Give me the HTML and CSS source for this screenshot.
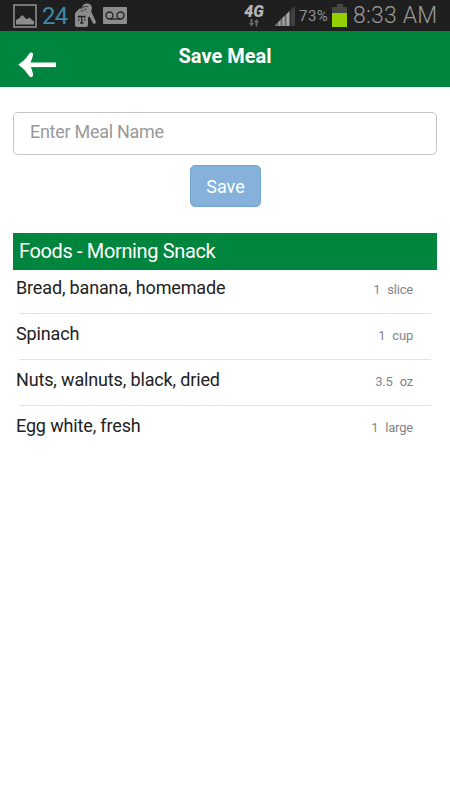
FILE: index.html
```html
<!DOCTYPE html>
<html lang="en">
<head>
    <meta charset="UTF-8">
    <meta name="viewport" content="width=device-width, initial-scale=1.0">
    <title>Save Meal</title>
    <link rel="stylesheet" href="styles.css">
</head>
<body>
    <!-- Device status bar -->
    <div class="status-bar">
        <div class="status-left">
            <svg class="icon-picture" width="24" height="24" viewBox="0 0 24 24">
                <rect x="1" y="1" width="22" height="22" fill="none" stroke="#8c8c8c" stroke-width="1.6"/>
                <path d="M3 20.500V16l3.500-2 2-2.500 1.500 0 2.500 3 2 .5 2-1.500 3 3 1.500.5v3.500z" fill="#8c8c8c"/>
            </svg>
            <span class="temperature">24</span>
            <svg class="icon-keys" width="22" height="25" viewBox="0 0 22 25">
                <path d="M0 10L4.500 5.500h4L13 10v12q0 2-2 2H2q-2 0-2-2z" fill="#8c8c8c"/>
                <path d="M7 5.500Q7.500 1 11 .5 16 0 17 4.500q0 2-1 3.500l5 11-1 2-2-.5-3.500-7-1.500 1V10L9 6z" fill="#8c8c8c"/>
                <path d="M5.500 7.500q1.500 1.500 3 0t3-1.500M8 5q1.500-2.500 3-1.500t2-.5" fill="none" stroke="#3c3c3c" stroke-width="1"/>
                <path d="M3.700 15V13.500h6.100V15M6.750 13.500v6.500M5 20h3.500" fill="none" stroke="#252525" stroke-width="1.300"/>
                <path d="M3 17.200h1.500M9 17.200h1.500" stroke="#252525" stroke-width="1.300"/>
            </svg>
            <svg class="icon-voicemail" width="24" height="17" viewBox="0 0 24 17">
                <rect width="24" height="17" rx="1" fill="#8c8c8c"/>
                <g fill="none" stroke="#292929" stroke-width="1.400">
                    <circle cx="6.500" cy="8.500" r="3.500"/>
                    <circle cx="17.500" cy="8.500" r="3.500"/>
                    <path d="M6.500 12h11"/>
                </g>
            </svg>
        </div>
        <div class="status-right">
            <div class="network">
                <span class="network-type">4G</span>
                <svg width="10" height="8" viewBox="0 0 10 8">
                    <path d="M1.600 0h1.800v4H5L2.500 7.500 0 4h1.600zM6.600 7.500h1.800V3.500H10L7.500 0 5 3.500h1.600z" fill="#6c6c6c"/>
                </svg>
            </div>
            <svg class="icon-signal" width="21" height="20" viewBox="0 0 21 20">
                <path d="M0 20L16 4.500V20z" fill="#696969"/>
                <path d="M4.500 20v-4l2-2v6zM8.500 20v-8l2-2v10zM12.500 20V8.200l2.500-2.400V20z" fill="#a6a6a6"/>
                <path d="M16.500 20V4L21 0v20z" fill="#404040"/>
            </svg>
            <span class="battery-level">73%</span>
            <svg class="icon-battery" width="15" height="23" viewBox="0 0 15 23">
                <path d="M5 0h6v3h4v6H0V3h5z" fill="#464646"/>
                <rect y="9" width="15" height="14" fill="#94d000"/>
            </svg>
            <span class="clock">8:33 AM</span>
        </div>
    </div>

    <header class="header">
        <svg class="back-arrow" width="39" height="26" viewBox="0 0 39 26">
            <path d="M7 12.800h31" stroke="#fff" stroke-width="4.600" fill="none"/>
            <path d="M.3 12.500Q7.500 8 11.300 1.500 12.200.2 13.700.5 15.700 1.200 15 3.500 13.500 8.500 11.800 12.500 13.800 17 15.100 22 15.500 24.500 13.700 25.100 12 25.600 11.200 24 7 17.500.3 12.500z" fill="#fff"/>
        </svg>
        <h1 class="title">Save Meal</h1>
    </header>

    <main class="content">
        <form class="meal-form">
            <input type="text" class="meal-name" placeholder="Enter Meal Name">
            <button type="button" class="save-button">Save</button>
        </form>

        <h2 class="section-title">Foods - Morning Snack</h2>
        <ul class="food-list">
            <li class="food"><span class="food-name">Bread, banana, homemade</span><span class="amount"><span>1</span><span>slice</span></span></li>
            <li class="food"><span class="food-name">Spinach</span><span class="amount"><span>1</span><span>cup</span></span></li>
            <li class="food"><span class="food-name">Nuts, walnuts, black, dried</span><span class="amount"><span>3.5</span><span>oz</span></span></li>
            <li class="food"><span class="food-name">Egg white, fresh</span><span class="amount"><span>1</span><span>large</span></span></li>
        </ul>
    </main>
</body>
</html>
```

FILE: styles.css
```css
* {
    box-sizing: border-box;
}

body {
    margin: 0;
    min-height: 100vh;
    background-color: #fff;
    color: #222;
    font-family: Roboto, sans-serif;
}

.status-bar {
    display: flex;
    justify-content: space-between;
    height: 31px;
    padding: 0 13px;
    background-color: #1f1f1f;
    color: #8f8f8f;
}

.status-left,
.status-right {
    display: flex;
    align-items: flex-start;
}

.icon-picture {
    margin-top: 4px;
}

.temperature {
    width: 26px;
    margin: 2px 0 0 5px;
    color: #3a8aa8;
    font-size: 24px;
    line-height: 28px;
    letter-spacing: -0.8px;
}

.icon-keys {
    margin: 3px 0 0 7px;
}

.icon-voicemail {
    margin: 7px 0 0 6px;
}

.network {
    display: flex;
    flex-direction: column;
    align-items: center;
    width: 20px;
    margin: 4px 10px 0 0;
}

.network-type {
    color: #b5b5b5;
    font-size: 16px;
    font-style: italic;
    font-weight: 900;
    line-height: 15px;
}

.icon-signal {
    margin-top: 6px;
}

.battery-level {
    width: 30px;
    margin: 6px 3px 0 4px;
    font-size: 15px;
    line-height: 20px;
    letter-spacing: 0.5px;
}

.icon-battery {
    margin-top: 4px;
}

.clock {
    width: 84px;
    margin: 1px 0 0 6px;
    color: #9a9a9a;
    font-size: 23px;
    font-weight: 300;
    line-height: 30px;
    letter-spacing: 0.2px;
    white-space: nowrap;
}

.header {
    display: grid;
    grid-template-columns: 1fr auto 1fr;
    height: 56px;
    padding: 0 18px;
    background-color: #00853e;
    color: #fff;
}

.back-arrow {
    margin-top: 21px;
}

.title {
    margin: 13px 0 0;
    font-size: 20px;
    font-weight: 700;
    line-height: 24px;
}

.content {
    padding: 25px 13px 0;
}

.meal-form {
    display: flex;
    flex-direction: column;
    align-items: center;
    gap: 10px;
}

.meal-name {
    width: 100%;
    height: 43px;
    padding: 0 16px 5px;
    border: 1px solid #c4c4c4;
    border-radius: 5px;
    font-family: inherit;
    font-size: 18px;
    letter-spacing: -0.28px;
}

.meal-name::placeholder {
    color: #999;
}

.save-button {
    width: 71px;
    height: 42px;
    padding: 0 0 0 1px;
    border: 1px solid #72a6d3;
    border-radius: 5px;
    background-color: #85b1db;
    color: #fff;
    font-family: inherit;
    font-size: 18px;
}

.section-title {
    height: 37px;
    margin: 26px 0 0;
    padding-left: 6px;
    background-color: #00853e;
    color: #fff;
    font-size: 20px;
    font-weight: 400;
    line-height: 36px;
    letter-spacing: -0.36px;
}

.food-list {
    margin: 0;
    padding: 0 6px 0 3px;
    list-style: none;
}

.food {
    display: flex;
    justify-content: space-between;
    height: 46px;
    padding: 10px 18px 0 0;
    line-height: 20px;
    background: linear-gradient(#e2e2e2, #e2e2e2) 3px 100% / 100% 1px no-repeat;
}

.food:first-child {
    height: 44px;
    padding-top: 8px;
}

.food:last-child {
    background: none;
}

.food-name {
    font-size: 18px;
    letter-spacing: -0.15px;
}

.amount {
    display: flex;
    gap: 7px;
    padding-top: 2px;
    color: #858585;
    font-size: 13px;
    letter-spacing: -0.2px;
}
```
